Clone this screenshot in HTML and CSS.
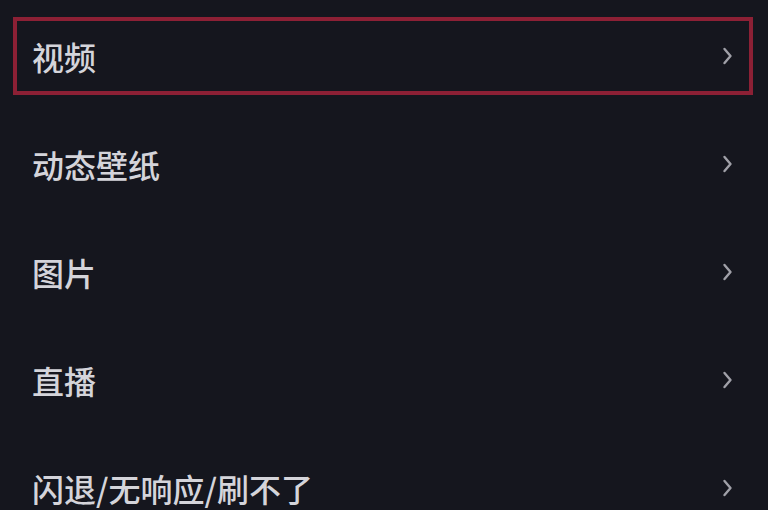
FILE: index.html
```html
<!DOCTYPE html>
<html lang="zh-CN">
<head>
<meta charset="utf-8">
<title>问题类型</title>
<link rel="stylesheet" href="styles.css">
</head>
<body>
<ul class="menu">
  <li class="item item-active"><span class="label">视频</span><svg class="chev" viewBox="0 0 10 18"><path d="M2 2 L8 9 L2 16"/></svg></li>
  <li class="item"><span class="label">动态壁纸</span><svg class="chev" viewBox="0 0 10 18"><path d="M2 2 L8 9 L2 16"/></svg></li>
  <li class="item"><span class="label">图片</span><svg class="chev" viewBox="0 0 10 18"><path d="M2 2 L8 9 L2 16"/></svg></li>
  <li class="item"><span class="label">直播</span><svg class="chev" viewBox="0 0 10 18"><path d="M2 2 L8 9 L2 16"/></svg></li>
  <li class="item"><span class="label">闪退/无响应/刷不了</span><svg class="chev" viewBox="0 0 10 18"><path d="M2 2 L8 9 L2 16"/></svg></li>
</ul>
</body>
</html>
```

FILE: styles.css
```css
html, body {
  margin: 0;
  padding: 0;
  background: #15161e;
  height: 100%;
  overflow: hidden;
}
body {
  font-family: "Noto Sans CJK SC", "Noto Sans", sans-serif;
}
.menu {
  list-style: none;
  margin: 0;
  padding: 17px 15px 0 13px;
  display: flex;
  flex-direction: column;
  gap: 30px;
}
.item {
  height: 70px;
  border: 4px solid transparent;
  display: flex;
  align-items: center;
  justify-content: space-between;
  padding: 0 16px 0 15px;
}
.item-active {
  border-color: #8c2035;
}
.label {
  color: #d4d4da;
  font-size: 32px;
  font-weight: 500;
  line-height: 1;
}
.chev {
  width: 11px;
  height: 18px;
  fill: none;
  stroke: #a0a0a8;
  stroke-width: 2.4;
  stroke-linecap: round;
  stroke-linejoin: round;
}
```
